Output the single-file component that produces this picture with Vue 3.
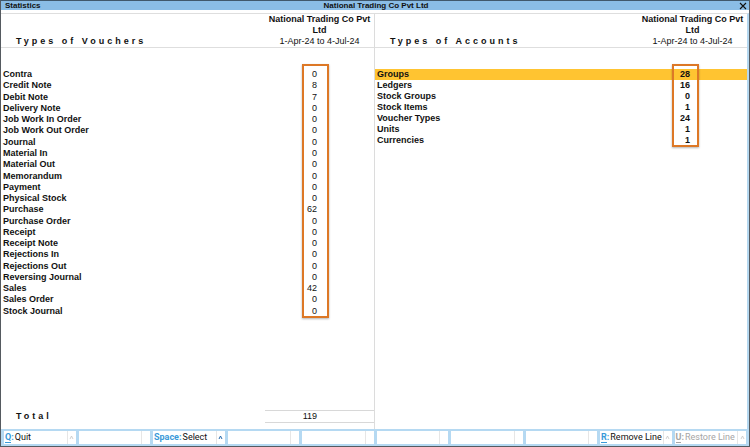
<script setup>
const company = 'National Trading Co Pvt Ltd'
const period = '1-Apr-24 to 4-Jul-24'

const vouchers = [
  ['Contra', 0],
  ['Credit Note', 8],
  ['Debit Note', 7],
  ['Delivery Note', 0],
  ['Job Work In Order', 0],
  ['Job Work Out Order', 0],
  ['Journal', 0],
  ['Material In', 0],
  ['Material Out', 0],
  ['Memorandum', 0],
  ['Payment', 0],
  ['Physical Stock', 0],
  ['Purchase', 62],
  ['Purchase Order', 0],
  ['Receipt', 0],
  ['Receipt Note', 0],
  ['Rejections In', 0],
  ['Rejections Out', 0],
  ['Reversing Journal', 0],
  ['Sales', 42],
  ['Sales Order', 0],
  ['Stock Journal', 0],
]

const accounts = [
  ['Groups', 28],
  ['Ledgers', 16],
  ['Stock Groups', 0],
  ['Stock Items', 1],
  ['Voucher Types', 24],
  ['Units', 1],
  ['Currencies', 1],
]

const actions = [
  { key: 'Q', label: 'Quit', underline: true },
  {},
  { key: 'Space', label: 'Select', active: true },
  {},
  {},
  {},
  {},
  {},
  { key: 'R', label: 'Remove Line', underline: true },
  { key: 'U', label: 'Restore Line', underline: true, disabled: true },
]
</script>

<template>
  <div class="window">
    <header class="titlebar">
      <span>Statistics</span>
      <h1>{{ company }}</h1>
      <button class="close" type="button" aria-label="Close">
        <svg viewBox="0 0 8 8" width="8" height="8"><path d="M1 1L7 7M7 1L1 7" /></svg>
      </button>
    </header>

    <main class="panels">
      <section class="panel">
        <div class="head">
          <h2>Types of Vouchers</h2>
          <div class="scope"><strong>{{ company }}</strong><span>{{ period }}</span></div>
        </div>
        <div class="list">
          <table class="vouchers">
            <tbody>
              <tr v-for="[name, count] in vouchers" :key="name">
                <th scope="row">{{ name }}</th>
                <td>{{ count }}</td>
              </tr>
            </tbody>
          </table>
          <div class="marker"></div>
        </div>
        <div class="total">
          <h2>Total</h2>
          <output>119</output>
        </div>
      </section>

      <section class="panel">
        <div class="head">
          <h2>Types of Accounts</h2>
          <div class="scope"><strong>{{ company }}</strong><span>{{ period }}</span></div>
        </div>
        <div class="list">
          <table class="accounts">
            <tbody>
              <tr v-for="([name, count], i) in accounts" :key="name" :class="{ selected: i === 0 }">
                <th scope="row">{{ name }}</th>
                <td>{{ count }}</td>
              </tr>
            </tbody>
          </table>
          <div class="marker marker-accounts"></div>
        </div>
      </section>
    </main>

    <footer class="actions">
      <div v-for="(a, i) in actions" :key="i" class="slot" :class="{ active: a.active, disabled: a.disabled }">
        <button v-if="a.key" type="button" class="action" :disabled="a.disabled">
          <b><span :class="{ underline: a.underline }">{{ a.key }}</span>:</b>{{ a.label }}
        </button>
        <span class="more">
          <svg v-if="a.key" viewBox="0 0 5 5" width="5" height="5"><path d="M1 4L2.5 1L4 4" /></svg>
        </span>
      </div>
    </footer>
  </div>
</template>

<style>
body {
  margin: 0;
}
</style>

<style scoped>
.window {
  box-sizing: border-box;
  min-height: 100vh;
  display: flex;
  flex-direction: column;
  border: 1px solid #555a60;
  border-top-color: #40586c;
  background: #fff;
  color: #111;
  font-family: "Liberation Sans", Arial, sans-serif;
  font-size: 9px;
  line-height: 11px;
}
h1,
h2 {
  margin: 0;
  font-size: inherit;
}
button {
  padding: 0;
  border: 0;
  background: none;
  color: inherit;
  font: inherit;
}
.titlebar {
  display: grid;
  grid-template-columns: 1fr auto 1fr;
  align-items: center;
  height: 9px;
  padding: 0 2px 0 4px;
  background: #8abde6;
  font-size: 8px;
  font-weight: bold;
  line-height: 9px;
}
.close {
  justify-self: end;
  display: flex;
}
.close path {
  fill: none;
  stroke: #111;
  stroke-width: 1.1;
}
.panels {
  flex: 1;
  display: grid;
  grid-template-columns: 1fr 1fr;
  margin-top: 3px;
  border-top: 1px solid #dedede;
  border-right: 2px solid #b5d8f0;
}
.panel {
  display: flex;
  flex-direction: column;
}
.panel + .panel {
  border-left: 1px solid #dcdcdc;
}
.head {
  display: flex;
  align-items: flex-end;
  border-bottom: 1px solid #dedede;
}
h2 {
  flex: 1;
  padding-left: 15px;
  letter-spacing: 3px;
}
.scope {
  width: 109px;
  text-align: center;
}
.scope strong,
.scope span {
  display: block;
}
.list {
  position: relative;
  margin-top: 21px;
}
table {
  width: 100%;
  border-collapse: collapse;
}
.vouchers {
  height: 248px;
}
th,
td {
  padding: 0;
}
th {
  padding-left: 2px;
  text-align: left;
}
td {
  width: 52px;
  padding-right: 57px;
  text-align: right;
}
.accounts td {
  font-weight: bold;
}
.selected {
  background: #ffc431;
}
.marker {
  position: absolute;
  box-sizing: border-box;
  top: -5px;
  right: 45px;
  bottom: -1px;
  width: 27px;
  border: 2px solid #dd7826;
  box-shadow: 0 1px 2px rgba(0, 0, 0, 0.3);
  pointer-events: none;
}
.marker-accounts {
  right: 48px;
}
.total {
  display: flex;
  align-items: center;
  margin-top: auto;
  margin-bottom: 6px;
}
output {
  box-sizing: border-box;
  width: 109px;
  padding-right: 57px;
  border-top: 1px solid #d8d8d8;
  border-bottom: 1px solid #d8d8d8;
  text-align: right;
}
.actions {
  display: flex;
  gap: 3px;
  padding: 2px 3px;
  background: #b5d9f2;
  font-family: Roboto, "Liberation Sans", sans-serif;
}
.slot {
  flex: 1 1 0;
  min-width: 0;
  display: flex;
  justify-content: space-between;
  height: 13px;
  background: #fff;
}
.action {
  padding-left: 1px;
  line-height: 13px;
  white-space: nowrap;
}
.action b {
  margin-right: 1px;
  color: #3a9ad9;
}
.underline {
  border-bottom: 1px solid currentColor;
}
.more {
  box-sizing: border-box;
  display: flex;
  align-items: center;
  justify-content: center;
  margin-left: auto;
  width: 9px;
  border-left: 1px solid #e6e6e6;
}
.more path {
  fill: none;
  stroke: #c4c4c4;
  stroke-width: 0.8;
}
.active .more path {
  stroke: #2468ac;
  stroke-width: 1;
}
.disabled .action,
.disabled b {
  color: #a5a5a5;
}
</style>
